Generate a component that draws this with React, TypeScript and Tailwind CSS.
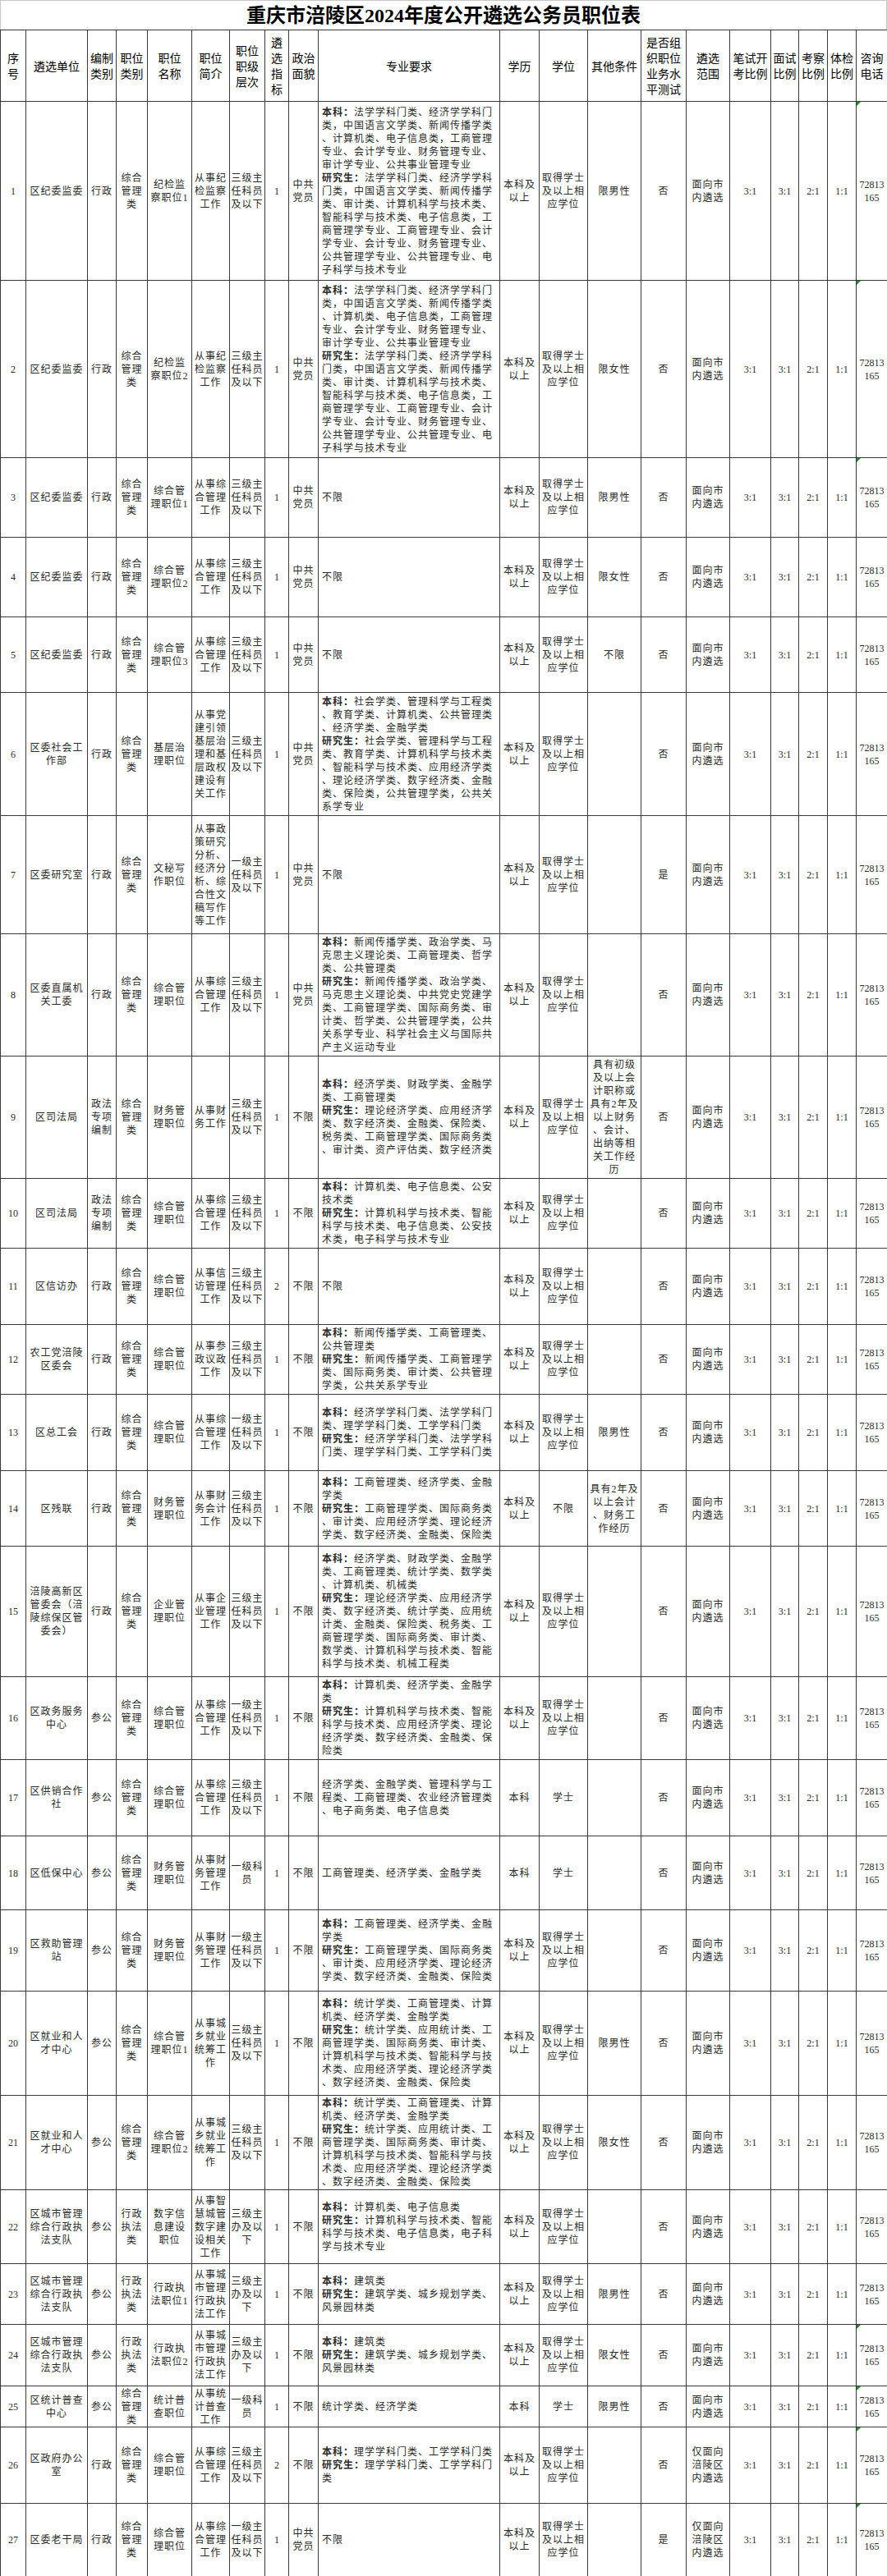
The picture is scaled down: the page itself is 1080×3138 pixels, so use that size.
import React from "react";

// 重庆市涪陵区 2024 年度公开遴选公务员职位表

type Major = string | { bk: string; yjs: string };

type Row = {
  unit: string;
  bz: string;
  cat: string;
  name: string;
  intro: string;
  level: string;
  num: string;
  party: string;
  major: Major;
  edu?: string;
  deg?: string;
  other?: string;
  test?: string;
  scope?: string;
  h: string;
  tri?: boolean;
};

const L3 = "三级主任科员及以下";
const L1 = "一级主任科员及以下";
const ZH = "综合管理类";
const ZHGL = "从事综合管理工作";
const SCOPE_CITY = "面向市内遴选";
const SCOPE_FL = "仅面向涪陵区内遴选";

const JW: Major = {
  bk: "法学学科门类、经济学学科门类，中国语言文学类、新闻传播学类、计算机类、电子信息类，工商管理专业、会计学专业、财务管理专业、审计学专业、公共事业管理专业",
  yjs: "法学学科门类、经济学学科门类，中国语言文学类、新闻传播学类、审计类、计算机科学与技术类、智能科学与技术类、电子信息类，工商管理学专业、工商管理专业、会计学专业、会计专业、财务管理专业、公共管理学专业、公共管理专业、电子科学与技术专业",
};

const CW: Major = {
  bk: "工商管理类、经济学类、金融学类",
  yjs: "工商管理学类、国际商务类、审计类、应用经济学类、理论经济学类、数字经济类、金融类、保险类",
};

const JY: Major = {
  bk: "统计学类、工商管理类、计算机类、经济学类、金融学类",
  yjs: "统计学类、应用统计类、工商管理学类、国际商务类、审计类、计算机科学与技术类、智能科学与技术类、应用经济学类、理论经济学类、数字经济类、金融类、保险类",
};

const JZ: Major = {
  bk: "建筑类",
  yjs: "建筑学类、城乡规划学类、风景园林类",
};

const rows: Row[] = [
  { unit: "区纪委监委", bz: "行政", cat: ZH, name: "纪检监察职位1", intro: "从事纪检监察工作", level: L3, num: "1", party: "中共党员", major: JW, other: "限男性", h: "h-[218px]", tri: true },
  { unit: "区纪委监委", bz: "行政", cat: ZH, name: "纪检监察职位2", intro: "从事纪检监察工作", level: L3, num: "1", party: "中共党员", major: JW, other: "限女性", h: "h-[216px]", tri: true },
  { unit: "区纪委监委", bz: "行政", cat: ZH, name: "综合管理职位1", intro: ZHGL, level: L3, num: "1", party: "中共党员", major: "不限", other: "限男性", h: "h-[97px]", tri: true },
  { unit: "区纪委监委", bz: "行政", cat: ZH, name: "综合管理职位2", intro: ZHGL, level: L3, num: "1", party: "中共党员", major: "不限", other: "限女性", h: "h-[97px]" },
  { unit: "区纪委监委", bz: "行政", cat: ZH, name: "综合管理职位3", intro: ZHGL, level: L3, num: "1", party: "中共党员", major: "不限", other: "不限", h: "h-[92px]" },
  {
    unit: "区委社会工作部", bz: "行政", cat: ZH, name: "基层治理职位", intro: "从事党建引领基层治理和基层政权建设有关工作", level: L3, num: "1", party: "中共党员",
    major: {
      bk: "社会学类、管理科学与工程类、教育学类、计算机类、公共管理类、经济学类、金融学类",
      yjs: "社会学类、管理科学与工程类、教育学类、计算机科学与技术类、智能科学与技术类、应用经济学类、理论经济学类、数字经济类、金融类、保险类，公共管理学类，公共关系学专业",
    },
    h: "h-[150px]",
  },
  { unit: "区委研究室", bz: "行政", cat: ZH, name: "文秘写作职位", intro: "从事政策研究分析、经济分析、综合性文稿写作等工作", level: L1, num: "1", party: "中共党员", major: "不限", test: "是", h: "h-[144px]" },
  {
    unit: "区委直属机关工委", bz: "行政", cat: ZH, name: "综合管理职位", intro: ZHGL, level: L3, num: "1", party: "中共党员",
    major: {
      bk: "新闻传播学类、政治学类、马克思主义理论类、工商管理类、哲学类、公共管理类",
      yjs: "新闻传播学类、政治学类、马克思主义理论类、中共党史党建学类、工商管理学类、国际商务类、审计类、哲学类、公共管理学类，公共关系学专业、科学社会主义与国际共产主义运动专业",
    },
    h: "h-[149px]",
  },
  {
    unit: "区司法局", bz: "政法专项编制", cat: ZH, name: "财务管理职位", intro: "从事财务工作", level: L3, num: "1", party: "不限",
    major: {
      bk: "经济学类、财政学类、金融学类、工商管理类",
      yjs: "理论经济学类、应用经济学类、数字经济类、金融类、保险类、税务类、工商管理学类、国际商务类、审计类、资产评估类、数字经济类",
    },
    other: "具有初级及以上会计职称或具有2年及以上财务、会计、出纳等相关工作经历",
    h: "h-[149px]",
  },
  {
    unit: "区司法局", bz: "政法专项编制", cat: ZH, name: "综合管理职位", intro: ZHGL, level: L3, num: "1", party: "不限",
    major: {
      bk: "计算机类、电子信息类、公安技术类",
      yjs: "计算机科学与技术类、智能科学与技术类、电子信息类、公安技术类，电子科学与技术专业",
    },
    h: "h-[85px]",
  },
  { unit: "区信访办", bz: "行政", cat: ZH, name: "综合管理职位", intro: "从事信访管理工作", level: L3, num: "2", party: "不限", major: "不限", h: "h-[93px]" },
  {
    unit: "农工党涪陵区委会", bz: "行政", cat: ZH, name: "综合管理职位", intro: "从事参政议政工作", level: L3, num: "1", party: "不限",
    major: {
      bk: "新闻传播学类、工商管理类、公共管理类",
      yjs: "新闻传播学类、工商管理学类、国际商务类、审计类、公共管理学类，公共关系学专业",
    },
    h: "h-[85px]",
  },
  {
    unit: "区总工会", bz: "行政", cat: ZH, name: "综合管理职位", intro: ZHGL, level: L1, num: "1", party: "不限",
    major: {
      bk: "经济学学科门类、法学学科门类、理学学科门类、工学学科门类",
      yjs: "经济学学科门类、法学学科门类、理学学科门类、工学学科门类",
    },
    other: "限男性",
    h: "h-[93px]",
  },
  {
    unit: "区残联", bz: "行政", cat: ZH, name: "财务管理职位", intro: "从事财务会计工作", level: L3, num: "1", party: "不限", major: CW,
    deg: "不限", other: "具有2年及以上会计、财务工作经历", h: "h-[92px]",
  },
  {
    unit: "涪陵高新区管委会（涪陵综保区管委会）", bz: "行政", cat: ZH, name: "企业管理职位", intro: "从事企业管理工作", level: L3, num: "1", party: "不限",
    major: {
      bk: "经济学类、财政学类、金融学类、工商管理类、统计学类、数学类、计算机类、机械类",
      yjs: "理论经济学类、应用经济学类、数字经济类、统计学类、应用统计类、金融类、保险类、税务类、工商管理学类、国际商务类、审计类、数学类、计算机科学与技术类、智能科学与技术类、机械工程类",
    },
    h: "h-[159px]",
  },
  {
    unit: "区政务服务中心", bz: "参公", cat: ZH, name: "综合管理职位", intro: ZHGL, level: L1, num: "1", party: "不限",
    major: {
      bk: "计算机类、经济学类、金融学类",
      yjs: "计算机科学与技术类、智能科学与技术类、应用经济学类、理论经济学类、数字经济类、金融类、保险类",
    },
    h: "h-[101px]",
  },
  {
    unit: "区供销合作社", bz: "参公", cat: ZH, name: "综合管理职位", intro: ZHGL, level: L3, num: "1", party: "不限",
    major: "经济学类、金融学类、管理科学与工程类、工商管理类、农业经济管理类、电子商务类、电子信息类",
    edu: "本科", deg: "学士", h: "h-[93px]",
  },
  { unit: "区低保中心", bz: "参公", cat: ZH, name: "财务管理职位", intro: "从事财务管理工作", level: "一级科员", num: "1", party: "不限", major: "工商管理类、经济学类、金融学类", edu: "本科", deg: "学士", h: "h-[90px]" },
  { unit: "区救助管理站", bz: "参公", cat: ZH, name: "财务管理职位", intro: "从事财务管理工作", level: L1, num: "1", party: "不限", major: CW, h: "h-[99px]" },
  { unit: "区就业和人才中心", bz: "参公", cat: ZH, name: "综合管理职位1", intro: "从事城乡就业统筹工作", level: L3, num: "1", party: "不限", major: JY, other: "限男性", h: "h-[127px]" },
  { unit: "区就业和人才中心", bz: "参公", cat: ZH, name: "综合管理职位2", intro: "从事城乡就业统筹工作", level: L3, num: "1", party: "不限", major: JY, other: "限女性", h: "h-[115px]" },
  {
    unit: "区城市管理综合行政执法支队", bz: "参公", cat: "行政执法类", name: "数字信息建设职位", intro: "从事智慧城管数字建设相关工作", level: "三级主办及以下", num: "1", party: "不限",
    major: {
      bk: "计算机类、电子信息类",
      yjs: "计算机科学与技术类、智能科学与技术类、电子信息类，电子科学与技术专业",
    },
    h: "h-[90px]",
  },
  { unit: "区城市管理综合行政执法支队", bz: "参公", cat: "行政执法类", name: "行政执法职位1", intro: "从事城市管理行政执法工作", level: "三级主办及以下", num: "1", party: "不限", major: JZ, other: "限男性", h: "h-[74px]" },
  { unit: "区城市管理综合行政执法支队", bz: "参公", cat: "行政执法类", name: "行政执法职位2", intro: "从事城市管理行政执法工作", level: "三级主办及以下", num: "1", party: "不限", major: JZ, other: "限女性", h: "h-[75px]", tri: true },
  { unit: "区统计普查中心", bz: "参公", cat: ZH, name: "统计普查职位", intro: "从事统计普查工作", level: "一级科员", num: "1", party: "不限", major: "统计学类、经济学类", edu: "本科", deg: "学士", other: "限男性", h: "h-[50px]", tri: true },
  {
    unit: "区政府办公室", bz: "行政", cat: ZH, name: "综合管理职位", intro: ZHGL, level: L3, num: "2", party: "不限",
    major: {
      bk: "理学学科门类、工学学科门类",
      yjs: "理学学科门类、工学学科门类",
    },
    scope: SCOPE_FL, h: "h-[93px]", tri: true,
  },
  { unit: "区委老干局", bz: "行政", cat: ZH, name: "综合管理职位", intro: ZHGL, level: L1, num: "1", party: "中共党员", major: "不限", test: "是", scope: SCOPE_FL, h: "h-[89px]", tri: true },
];

const headers: string[][] = [
  ["序", "号"],
  ["遴选单位"],
  ["编制", "类别"],
  ["职位", "类别"],
  ["职位", "名称"],
  ["职位", "简介"],
  ["职位", "职级", "层次"],
  ["遴", "选", "指", "标"],
  ["政治", "面貌"],
  ["专业要求"],
  ["学历"],
  ["学位"],
  ["其他条件"],
  ["是否组", "织职位", "业务水", "平测试"],
  ["遴选", "范围"],
  ["笔试开", "考比例"],
  ["面试", "比例"],
  ["考察", "比例"],
  ["体检", "比例"],
  ["咨询", "电话"],
];

const colWidths = [
  "w-[31px]", "w-[75px]", "w-[35px]", "w-[38px]", "w-[54px]", "w-[46px]", "w-[43px]", "w-[29px]", "w-[36px]", "w-[221px]",
  "w-[48px]", "w-[59px]", "w-[65px]", "w-[55px]", "w-[53px]", "w-[50px]", "w-[34px]", "w-[35px]", "w-[35px]", "w-[38px]",
];

const cell = "border border-[#3a3a3a] text-center align-middle py-0 [line-break:anywhere]";
const cjk = "text-[12px] leading-4 tracking-[1px]";
const num = "text-[12px] leading-4 tracking-normal";

// the sheet wraps every 16 full-width characters, punctuation included
function chunk(s: string, n = 16) {
  const chars = Array.from(s);
  const out: string[] = [];
  for (let i = 0; i < chars.length; i += n) out.push(chars.slice(i, i + n).join(""));
  return out;
}

function Section({ label, text }: { label?: string; text: string }) {
  const lines = chunk((label ?? "") + text);
  return (
    <>
      {lines.map((ln, i) => (
        <div key={i} className="whitespace-nowrap">
          {i === 0 && label ? (
            <>
              <span className="font-bold">{label}</span>
              <span>{ln.slice(label.length)}</span>
            </>
          ) : (
            ln
          )}
        </div>
      ))}
    </>
  );
}

function MajorText({ major }: { major: Major }) {
  if (typeof major === "string") return <Section text={major} />;
  return (
    <>
      <Section label="本科：" text={major.bk} />
      <Section label="研究生：" text={major.yjs} />
    </>
  );
}

export default function App() {
  return (
    <div className="w-[1080px] bg-white text-[#2a2a2a] font-['Liberation_Serif','Noto_Sans_CJK_SC',serif]">
      <div className="h-[36px] flex items-center justify-center border-t border-x border-[#c8c8c8]">
        <h1 className="text-[24px] font-bold text-black">重庆市涪陵区2024年度公开遴选公务员职位表</h1>
      </div>
      <table className="w-[1080px] table-fixed border-collapse">
        <colgroup>
          {colWidths.map((w, i) => (
            <col key={i} className={w} />
          ))}
        </colgroup>
        <thead>
          <tr className="h-[87px]">
            {headers.map((lines, i) => (
              <th
                key={i}
                className="border border-[#3a3a3a] px-0 py-0 text-center align-middle text-[14px] leading-[19px] font-normal text-black font-['Noto_Sans_CJK_SC',sans-serif]"
              >
                {lines.map((l, j) => (
                  <div key={j}>{l}</div>
                ))}
              </th>
            ))}
          </tr>
        </thead>
        <tbody>
          {rows.map((r, i) => (
            <tr key={i} className={r.h}>
              <td className={`${cell} ${num} px-0`}>{i + 1}</td>
              <td className={`${cell} ${cjk} px-[3px]`}>{r.unit}</td>
              <td className={`${cell} ${cjk} px-[2px]`}>{r.bz}</td>
              <td className={`${cell} ${cjk} px-[2px]`}>{r.cat}</td>
              <td className={`${cell} ${cjk} px-[2px]`}>{r.name}</td>
              <td className={`${cell} ${cjk} px-[2px]`}>{r.intro}</td>
              <td className={`${cell} ${cjk} px-0`}>{r.level}</td>
              <td className={`${cell} ${num} px-0`}>{r.num}</td>
              <td className={`${cell} ${cjk} px-[2px]`}>{r.party}</td>
              <td className={`${cell} ${cjk} px-[4px] !text-left`}>
                <MajorText major={r.major} />
              </td>
              <td className={`${cell} ${cjk} px-[2px]`}>{r.edu ?? "本科及以上"}</td>
              <td className={`${cell} ${cjk} px-[2px]`}>{r.deg ?? "取得学士及以上相应学位"}</td>
              <td className={`${cell} ${cjk} px-[1px]`}>{r.other ?? ""}</td>
              <td className={`${cell} ${cjk} px-[2px]`}>{r.test ?? "否"}</td>
              <td className={`${cell} ${cjk} px-[2px]`}>{r.scope ?? SCOPE_CITY}</td>
              <td className={`${cell} ${num} px-0`}>3:1</td>
              <td className={`${cell} ${num} px-0`}>3:1</td>
              <td className={`${cell} ${num} px-0`}>2:1</td>
              <td className={`${cell} ${num} px-0`}>1:1</td>
              <td className={`${cell} ${num} px-0 relative`}>
                {r.tri && (
                  <span className="absolute left-0 top-0 w-0 h-0 border-t-[5px] border-r-[5px] border-t-[#1f8a1f] border-r-transparent" />
                )}
                <div>72813</div>
                <div>165</div>
              </td>
            </tr>
          ))}
        </tbody>
      </table>
    </div>
  );
}
